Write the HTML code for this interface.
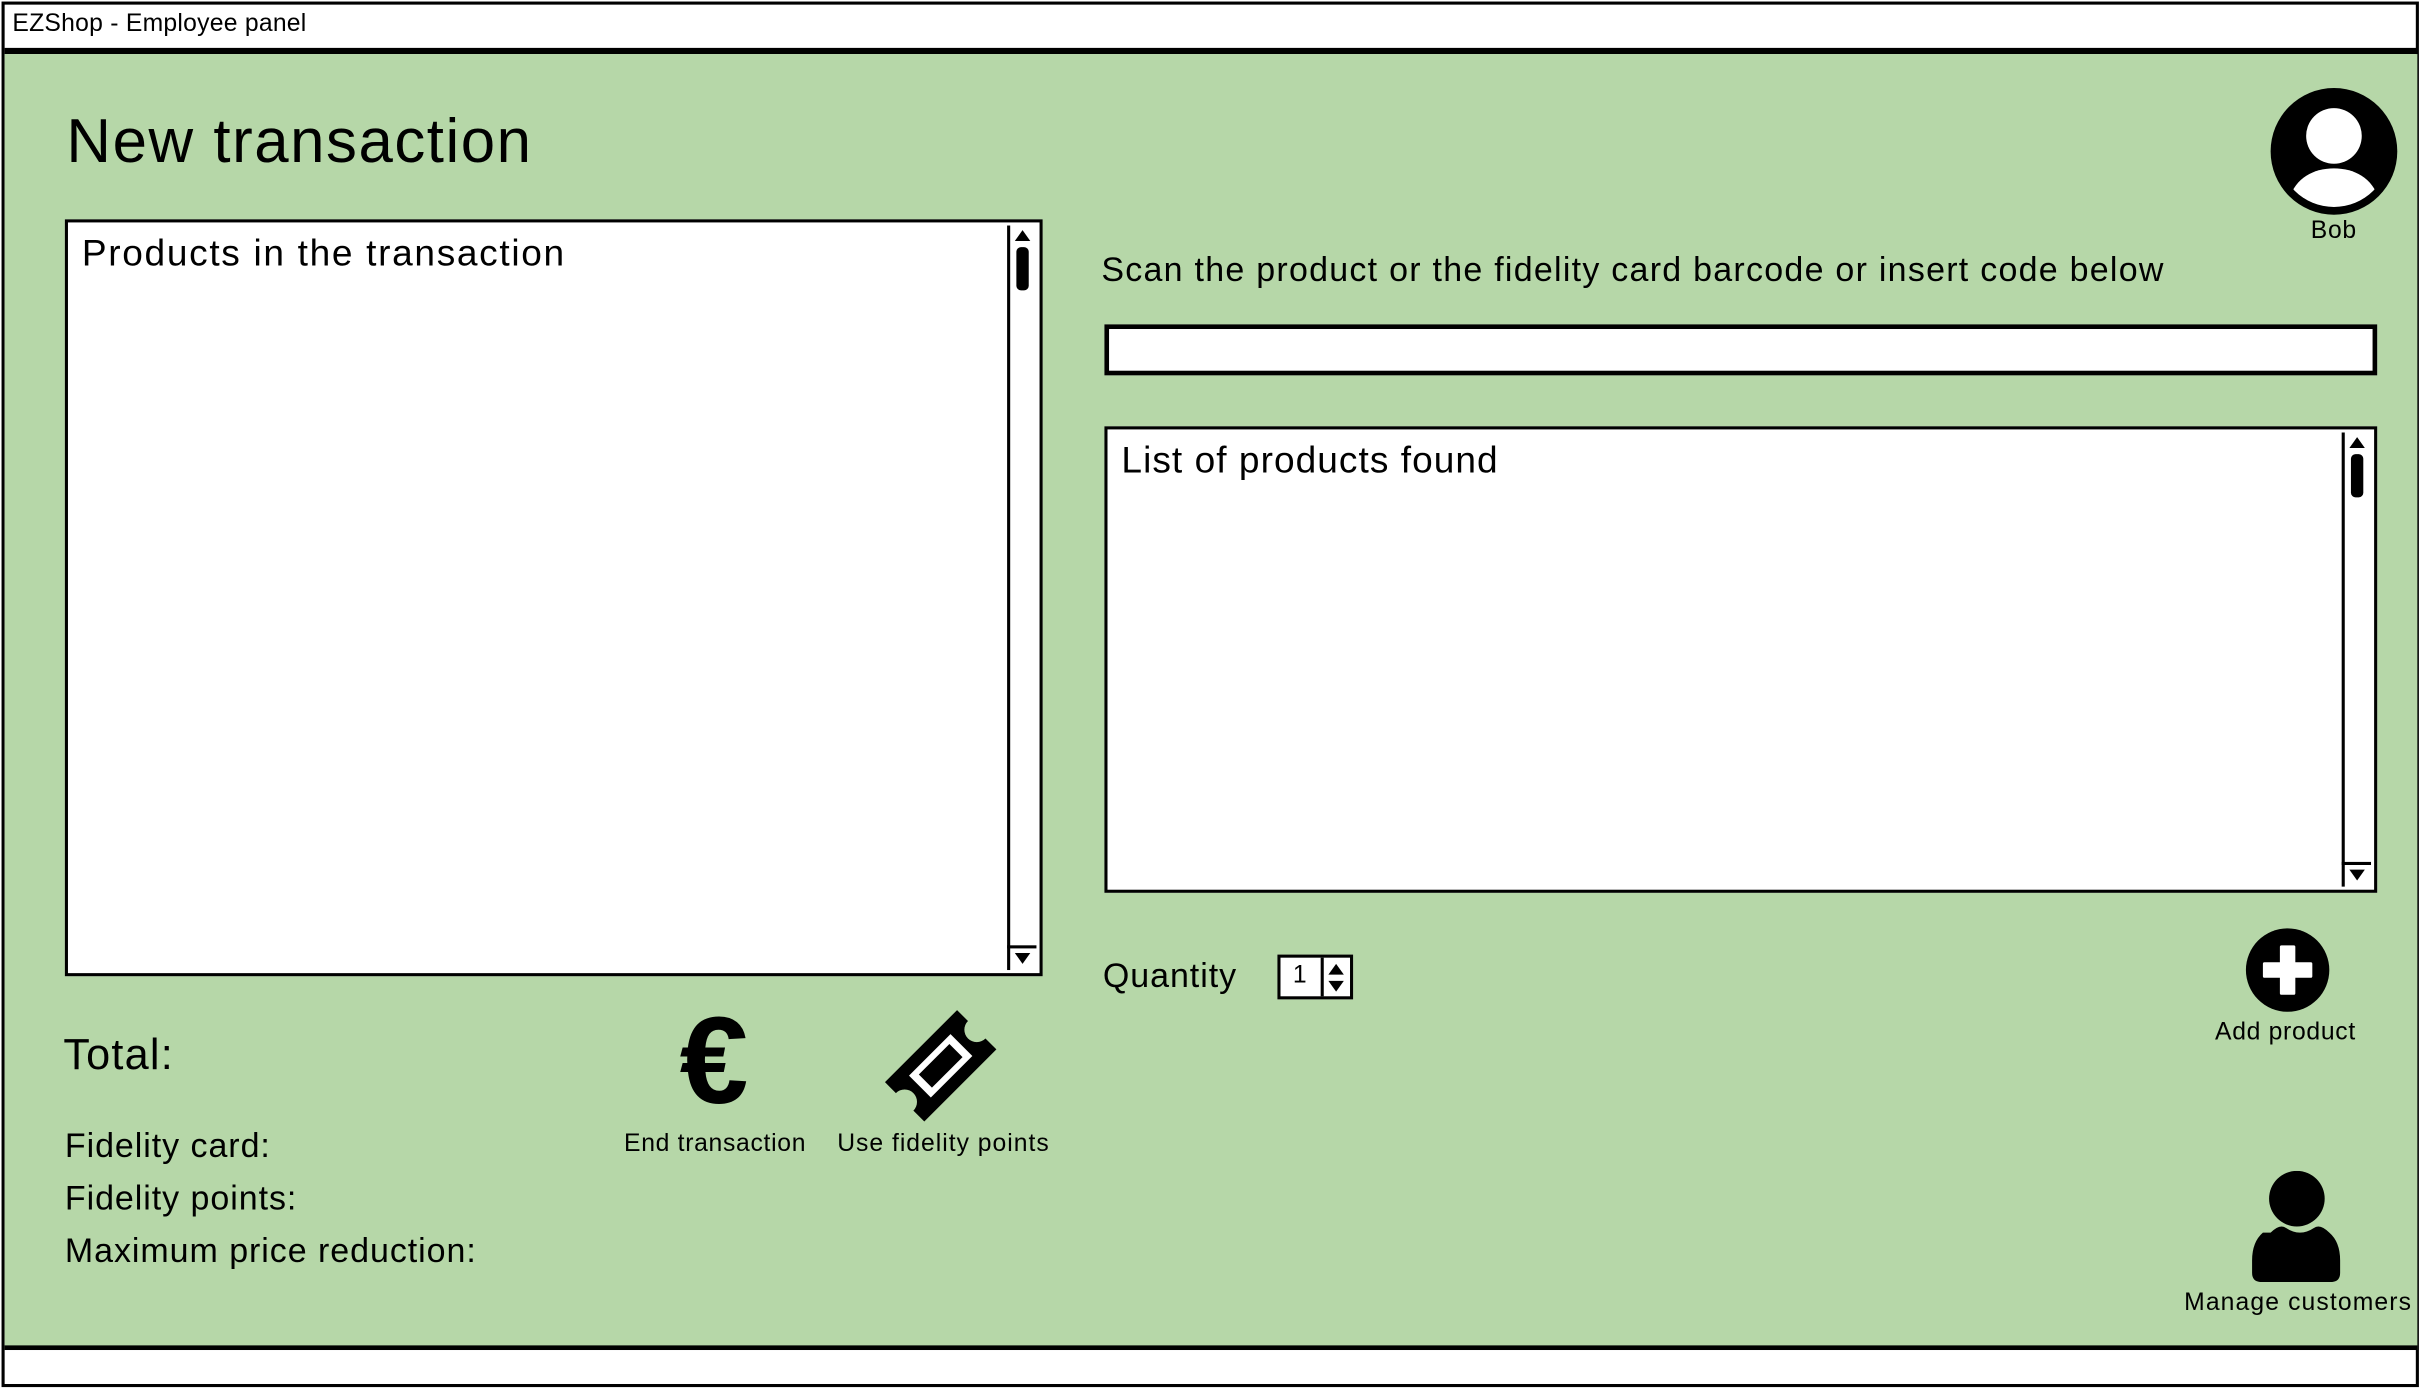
<!DOCTYPE html>
<html><head><meta charset="utf-8"><style>
html,body{margin:0;padding:0;background:#fff;overflow:hidden}
#w{position:absolute;left:0;top:0;width:1568px;height:901px;transform:scale(1.54464);transform-origin:0 0;font-family:"Liberation Sans",sans-serif;color:#000}
.a{position:absolute;white-space:nowrap;letter-spacing:0.028em}
.box{position:absolute;background:#fff;border:2px solid #000;box-sizing:border-box}
.sb{position:absolute;right:2px;top:2px;bottom:2px;width:17px;border-left:2px solid #000;background:#fff}
</style></head><body><div id="w">
<div style="position:absolute;left:1px;top:1px;width:1565px;height:897px;border:2px solid #000;box-sizing:border-box;background:#fff"></div>
<div style="position:absolute;left:3px;top:31px;width:1562px;height:4px;background:#000"></div>
<div class="a" style="left:8px;top:7px;font-size:16px;letter-spacing:0.01em">EZShop - Employee panel</div>
<div style="position:absolute;left:3px;top:35px;width:1562px;height:836px;background:#b6d7a8;border-bottom:3px solid #000"></div>
<div class="a" style="left:43px;top:70px;font-size:40px;letter-spacing:0.025em">New transaction</div>

<div class="box" style="left:42px;top:142px;width:633px;height:490px">
<div class="a" style="left:9px;top:7px;font-size:24px;letter-spacing:0.045em">Products in the transaction</div>
<div class="sb"><div style="position:absolute;left:3px;top:3px;border:5px solid transparent;border-bottom:7px solid #000;border-top:0"></div><div style="position:absolute;left:4px;top:14px;width:8px;height:28px;background:#000;border-radius:3px"></div><div style="position:absolute;left:3px;bottom:4px;border:5px solid transparent;border-top:7px solid #000;border-bottom:0"></div><div style="position:absolute;left:-2px;right:0;bottom:14px;border-top:2px solid #000"></div></div>
</div>

<div class="a" style="left:713px;top:162px;font-size:22px;letter-spacing:0.037em">Scan the product or the fidelity card barcode or insert code below</div>
<div class="box" style="left:715px;top:210px;width:824px;height:33px;border-width:3px"></div>
<div class="box" style="left:715px;top:276px;width:824px;height:302px">
<div class="a" style="left:9px;top:7px;font-size:24px">List of products found</div>
<div class="sb"><div style="position:absolute;left:3px;top:3px;border:5px solid transparent;border-bottom:7px solid #000;border-top:0"></div><div style="position:absolute;left:4px;top:14px;width:8px;height:28px;background:#000;border-radius:3px"></div><div style="position:absolute;left:3px;bottom:4px;border:5px solid transparent;border-top:7px solid #000;border-bottom:0"></div><div style="position:absolute;left:-2px;right:0;bottom:14px;border-top:2px solid #000"></div></div>
</div>

<div class="a" style="left:714px;top:619px;font-size:22px">Quantity</div>
<div class="box" style="left:827px;top:618px;width:49px;height:29px"><div class="a" style="left:8px;top:3px;font-size:16px">1</div><div style="position:absolute;left:26px;top:0;bottom:0;border-left:2px solid #000"></div><div style="position:absolute;left:31px;top:4px;border:5px solid transparent;border-bottom:7px solid #000;border-top:0"></div><div style="position:absolute;left:31px;top:15px;border:5px solid transparent;border-top:7px solid #000;border-bottom:0"></div></div>

<svg class="a" style="left:1453px;top:600px" width="56" height="56" viewBox="0 0 56 56"><circle cx="28" cy="28" r="27"/><path d="M24 13h8v11h11v8H32v11h-8V32H13v-8h11z" fill="#fff" stroke="#fff" stroke-linejoin="round" stroke-width="2"/></svg>
<div class="a" style="left:1434px;top:660px;font-size:16px">Add product</div>

<svg class="a" style="left:1468px;top:55px" width="86" height="86" viewBox="0 0 86 86"><circle cx="43" cy="43" r="41"/><circle cx="43" cy="33" r="18" fill="#fff"/><clipPath id="c"><circle cx="43" cy="43" r="36"/></clipPath><path clip-path="url(#c)" d="M14 74c4-14 16-20 29-20s25 6 29 20v12H14z" fill="#fff"/></svg>
<div class="a" style="left:1496px;top:141px;font-size:16px">Bob</div>

<div class="a" style="left:41px;top:667px;font-size:28px">Total:</div>
<div class="a" style="left:42px;top:729px;font-size:22px">Fidelity card:</div>
<div class="a" style="left:42px;top:763px;font-size:22px">Fidelity points:</div>
<div class="a" style="left:42px;top:797px;font-size:22px">Maximum price reduction:</div>

<div class="a" style="left:440px;top:642px;font-size:80px;font-weight:bold;line-height:90px">€</div>
<div class="a" style="left:404px;top:732px;font-size:16px">End transaction</div>
<svg class="a" style="left:568px;top:650px" width="82" height="80" viewBox="0 0 82 80"><g transform="rotate(-45 41 40)"><path d="M8 22h66v10a8 8 0 0 0 0 16v10H8V48a8 8 0 0 0 0-16z"/><rect x="22" y="30" width="38" height="20" fill="#fff"/><rect x="27" y="34" width="28" height="12"/></g></svg>
<div class="a" style="left:542px;top:732px;font-size:16px;letter-spacing:0.04em">Use fidelity points</div>

<svg class="a" style="left:1456px;top:758px" width="62" height="72" viewBox="0 0 62 72"><circle cx="31" cy="18" r="18"/><path d="M12 40q6-6 10-3q9 6 18 0q4-3 10 3q7 6 7 18v8q0 6-6 6H6q-6 0-6-6v-8q0-12 7-18z" transform="translate(2 0)"/></svg>
<div class="a" style="left:1414px;top:835px;font-size:16px;letter-spacing:0.045em">Manage customers</div>
</div></body></html>
